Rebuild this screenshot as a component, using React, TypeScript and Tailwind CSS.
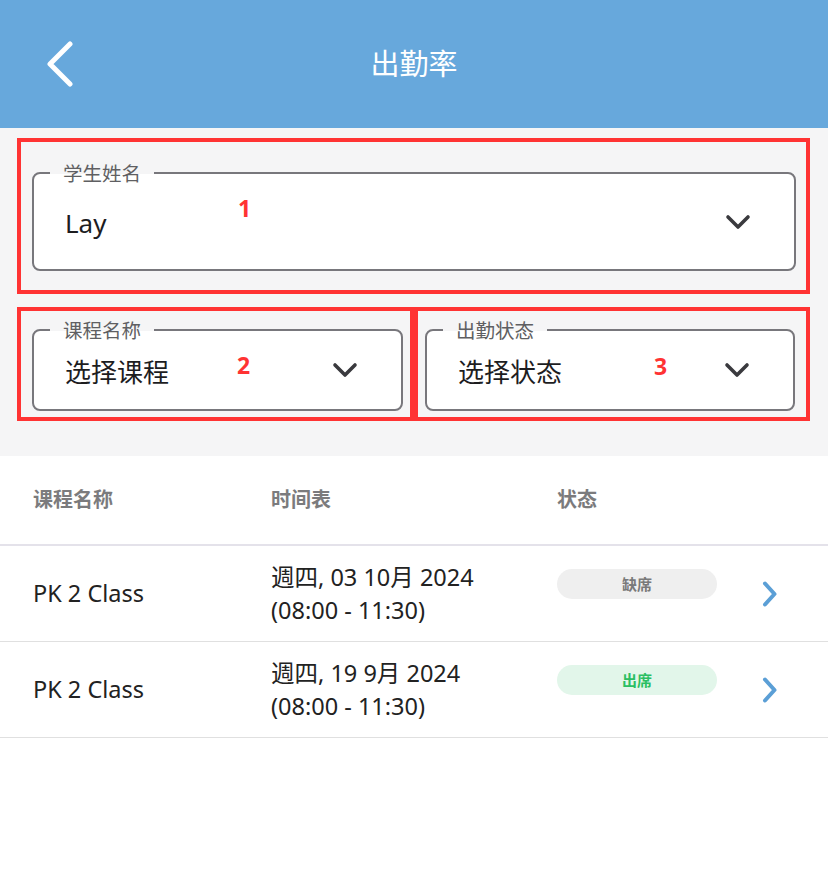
import React from 'react';

const font = "font-['Noto_Sans','Noto_Sans_CJK_SC',sans-serif]";

function ChevronDown() {
  return (
    <svg width="28" height="20" viewBox="0 0 28 20" fill="none" className="shrink-0">
      <path d="M4 5l10 10 10-10" stroke="#3a3a3e" strokeWidth="3.6" strokeLinecap="round" strokeLinejoin="round" />
    </svg>
  );
}

function ChevronRight() {
  return (
    <svg width="18" height="26" viewBox="0 0 18 26" fill="none">
      <path d="M4 2.5l9.5 10.5-9.5 10.5" stroke="#5b9fd6" strokeWidth="4" strokeLinecap="round" strokeLinejoin="round" />
    </svg>
  );
}

type FieldProps = {
  label: string;
  value: string;
  height: string;
};

function OutlinedField({ label, value, height }: FieldProps) {
  return (
    <div className={`relative ${height} rounded-[8px] border-2 border-[#78777c] bg-white flex items-center justify-between pl-[31px] pr-[42px]`}>
      {/* floating label sits on the border */}
      <span className="absolute left-[16px] top-0 -translate-y-1/2 px-[13px] text-[19.5px] leading-[22px] text-[#5f5f62] bg-[linear-gradient(to_bottom,#f5f5f6_50%,#ffffff_50%)]">
        {label}
      </span>
      <span className="text-[26px] text-[#1d1d1f] leading-none pt-[3px]">{value}</span>
      <ChevronDown />
    </div>
  );
}

type Row = {
  name: string;
  date: string;
  time: string;
  status: string;
  present: boolean;
};

const rows: Row[] = [
  { name: 'PK 2 Class', date: '週四, 03 10月 2024', time: '(08:00 - 11:30)', status: '缺席', present: false },
  { name: 'PK 2 Class', date: '週四, 19 9月 2024', time: '(08:00 - 11:30)', status: '出席', present: true },
];

export default function App() {
  return (
    <div className={`w-[828px] min-h-[885px] bg-white ${font}`}>
      {/* top bar */}
      <header className="h-[128px] bg-[#67a8dc] flex items-center">
        <div className="w-[74px] pl-[46px] flex items-center">
          <svg width="28" height="46" viewBox="0 0 28 46" fill="none">
            <path d="M24 3L4 23l20 20" stroke="#ffffff" strokeWidth="5" strokeLinecap="round" strokeLinejoin="round" />
          </svg>
        </div>
        <h1 className="flex-1 text-center text-white text-[29px] font-normal">出勤率</h1>
        <div className="w-[74px]" />
      </header>

      {/* filters */}
      <section className="h-[328px] bg-[#f5f5f6] pt-[10px] pl-[17px] pr-[18px]">
        <div className="relative border-4 border-[#ff3333] pt-[30px] pb-[19px] pl-[11px] pr-[10px]">
          <OutlinedField label="学生姓名" value="Lay" height="h-[99px]" />
          <span className="absolute z-10 left-[217px] top-[55px] text-[23px] font-bold text-[#ff3333] leading-none">1</span>
        </div>
        <div className="mt-[13px] flex">
          <div className="relative w-[397px] border-4 border-[#ff3333] pt-[18px] pb-[6px] pl-[11px] pr-[7px]">
            <OutlinedField label="课程名称" value="选择课程" height="h-[82px]" />
            <span className="absolute z-10 left-[216px] top-[43px] text-[23px] font-bold text-[#ff3333] leading-none">2</span>
          </div>
          <div className="relative flex-1 border-4 border-[#ff3333] pt-[18px] pb-[6px] pl-[7px] pr-[11px]">
            <OutlinedField label="出勤状态" value="选择状态" height="h-[82px]" />
            <span className="absolute z-10 left-[236px] top-[44px] text-[23px] font-bold text-[#ff3333] leading-none">3</span>
          </div>
        </div>
      </section>

      {/* table */}
      <div className="h-[90px] border-b-2 border-[#e4e2ea] flex items-center pl-[33px] text-[20px] font-semibold text-[#7b7b7d]">
        <div className="w-[238px]">课程名称</div>
        <div className="w-[286px]">时间表</div>
        <div>状态</div>
      </div>
      {rows.map((r, i) => (
        <div key={i} className="h-[96px] border-b border-[#e0e0e0] flex pl-[33px]">
          <div className="w-[238px] flex items-center text-[23.5px] text-[#222222]">{r.name}</div>
          <div className="w-[286px] flex flex-col justify-center text-[23.5px] leading-[33px] text-[#222222]">
            <span>{r.date}</span>
            <span>{r.time}</span>
          </div>
          <div className="w-[160px] pt-[23px]">
            <div
              className={
                r.present
                  ? 'h-[30px] rounded-full bg-[#e2f6ea] text-[#2bbf63] text-[15px] font-semibold flex items-center justify-center'
                  : 'h-[30px] rounded-full bg-[#efefef] text-[#7a7a7a] text-[15px] font-semibold flex items-center justify-center'
              }
            >
              {r.status}
            </div>
          </div>
          <div className="ml-[44px] flex items-center">
            <ChevronRight />
          </div>
        </div>
      ))}
    </div>
  );
}
